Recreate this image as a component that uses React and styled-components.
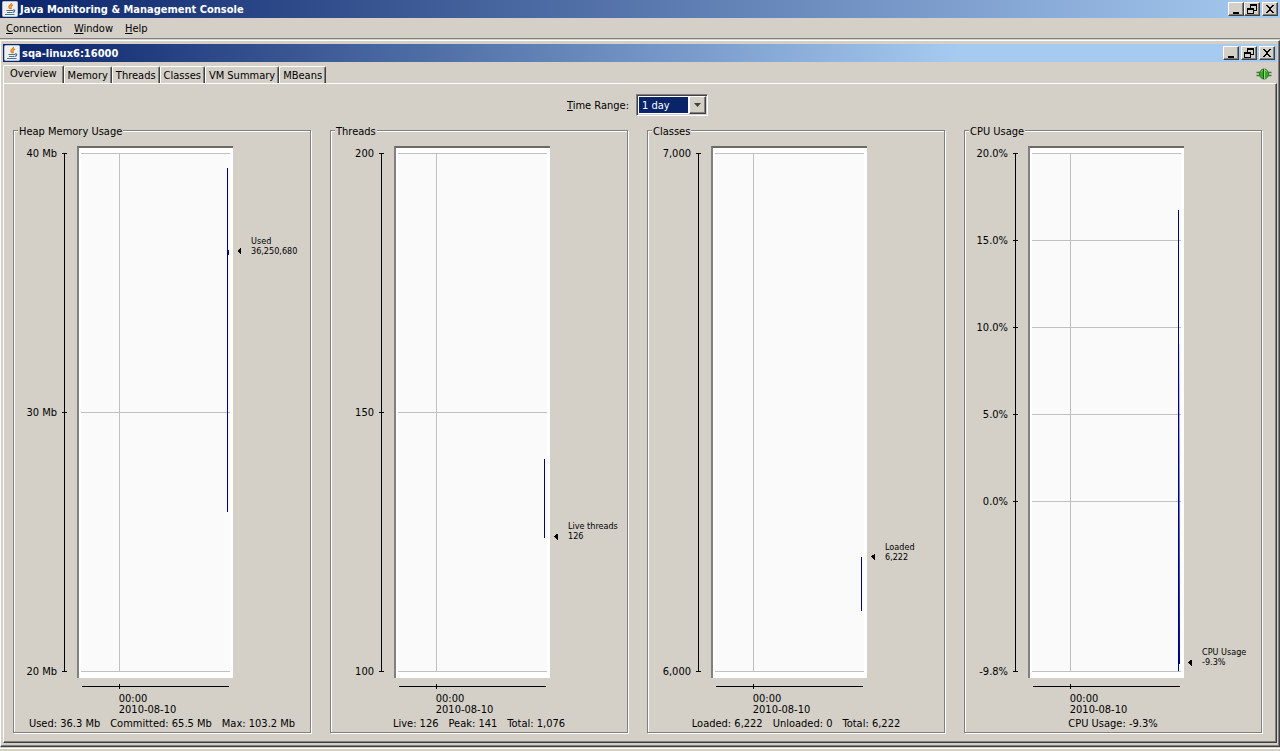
import React from 'react';
import styled, { createGlobalStyle } from 'styled-components';

const Global = createGlobalStyle`
  * { box-sizing: border-box; }
  body {
    margin: 0;
    background: #d4d0c8;
    color: #000;
    font: 11px/14px "DejaVu Sans Condensed", "DejaVu Sans", sans-serif;
  }
  button, select { font: inherit; color: inherit; }
`;

const Screen = styled.div`
  display: flex;
  flex-direction: column;
  min-height: 100vh;
  padding-bottom: 4px;
`;

const TitleBar = styled.header`
  display: flex;
  align-items: center;
  gap: 2px;
  height: 18px;
  padding: ${p => (p.$inner ? '0 2px 0 1px' : '0 2px')};
  background: linear-gradient(90deg, #0a246a, #a6caf0 ${p => (p.$inner ? '75%' : '100%')});
  color: #fff;
`;

const Title = styled.h1`
  flex: 1;
  margin: 0;
  padding-top: 2px;
  font-size: 11px;
  line-height: 14px;
  font-weight: bold;
`;

const Controls = styled.div`
  display: flex;
  gap: ${p => p.$gap || '0'};
`;

const ControlButton = styled.button`
  display: grid;
  place-items: center;
  width: 16px;
  height: 14px;
  margin-left: ${p => (p.$spaced ? '2px' : '0')};
  padding: 0;
  border: 1px solid;
  border-color: #fff #404040 #404040 #fff;
  background: #d4d0c8;
  box-shadow: inset -1px -1px 0 #808080;
`;

const MenuBar = styled.nav`
  display: flex;
  gap: 12px;
  height: 21px;
  padding: 4px 6px 0;
  border-bottom: 1px solid #808080;
`;

const MenuButton = styled.button`
  height: 14px;
  padding: 0;
  border: 0;
  background: none;
`;

const Frame = styled.main`
  display: flex;
  flex: 1;
  flex-direction: column;
  margin-top: 1px;
  padding: 3px 2px;
  border: 1px solid;
  border-color: #fff #404040 #404040 #fff;
  box-shadow: inset -1px -1px 0 #808080, 0 1px 0 #d4d0c8, 0 2px 0 #fff;
`;

const TabStrip = styled.div`
  display: flex;
  align-items: flex-end;
  height: 21px;
  padding-top: 2px;
`;

const Tab = styled.button`
  height: ${p => (p.$active ? '19px' : '17px')};
  margin-bottom: ${p => (p.$active ? '-1px' : '0')};
  padding: ${p => (p.$active ? '0 6px 2px' : '2px 3px 0')};
  border: 1px solid;
  border-color: #fff #404040 transparent #fff;
  border-bottom: 0;
  border-radius: 2px 2px 0 0;
  background: #d4d0c8;
  box-shadow: inset -1px 0 0 #808080;
  white-space: nowrap;
`;

const Status = styled.div`
  margin: 0 5px 2px auto;
  height: 14px;
`;

const Page = styled.div`
  display: flex;
  flex: 1;
  flex-direction: column;
  padding: 10px 14px 9px 9px;
  border: 1px solid;
  border-color: #fff #404040 #404040 #fff;
  box-shadow: inset -1px -1px 0 #808080;
`;

const RangeRow = styled.div`
  display: flex;
  align-items: center;
  justify-content: center;
  gap: 7px;
  margin-bottom: 14px;
`;

const RangeLabel = styled.label`
  padding-top: 2px;
`;

const SelectBox = styled.span`
  display: grid;
  grid-template-columns: 1fr 17px;
  width: 72px;
  height: 22px;
  padding: 1px;
  border: 1px solid;
  border-color: #808080 #fff #fff #808080;
  box-shadow: inset 1px 1px 0 #404040, inset -1px -1px 0 #d4d0c8;
  background: #fff;
`;

const Select = styled.select`
  grid-area: 1 / 1 / 2 / 3;
  appearance: none;
  margin: 1px 18px 1px 1px;
  padding: 2px 3px 0;
  border: 0;
  border-radius: 0;
  background: #0a246a;
  color: #fff;
  outline: 0;
`;

const SelectArrow = styled.span`
  grid-area: 1 / 2;
  display: grid;
  place-items: center;
  border: 1px solid;
  border-color: #fff #404040 #404040 #fff;
  box-shadow: inset -1px -1px 0 #808080;
  background: #d4d0c8;
  pointer-events: none;
`;

const Panels = styled.div`
  display: grid;
  flex: 1;
  grid-template-columns: repeat(4, minmax(0, 1fr));
  gap: 19px;
`;

const Panel = styled.section`
  display: flex;
  flex-direction: column;
  border: 1px solid #808080;
  box-shadow: 1px 1px 0 #fff, inset 1px 1px 0 #fff;
`;

const Legend = styled.h2`
  align-self: flex-start;
  margin: -6px 0 7px 4px;
  padding: 0 1px;
  background: #d4d0c8;
  font-size: 11px;
  line-height: 14px;
  font-weight: normal;
`;

const Chart = styled.div`
  display: grid;
  flex: 1;
  grid-template-columns: 63px minmax(0, 1fr) 77px;
  grid-template-rows: minmax(400px, 1fr) 38px;
`;

const Cell = styled.div`
  display: grid;
  grid-template-rows: minmax(0, 1fr);
  min-height: 0;
  padding: 7px 0;
`;

const Plot = styled.div`
  display: grid;
  grid-template-rows: minmax(0, 1fr);
  min-height: 0;
  padding: 5px 3px 7px 2px;
  border: solid;
  border-width: 2px 0 0 2px;
  border-color: #6c6a66 #fff #fff #808080;
  background: #fff;
`;

const TimeAxis = styled.div`
  grid-column: 2;
  display: grid;
  grid-template-rows: minmax(0, 1fr);
  min-height: 0;
  padding: 6px 4px 0 5px;
`;

const Drawing = styled.svg`
  display: block;
  width: 100%;
  height: 100%;
  overflow: visible;
  shape-rendering: crispEdges;
`;

const MarkerText = styled.text`
  font-size: 9px;
`;

const Summary = styled.footer`
  display: flex;
  justify-content: center;
  gap: 10px;
  margin-bottom: 1px;
  padding-top: 1px;
  white-space: nowrap;
`;

const JavaIcon = () => (
  <svg width="16" height="16" viewBox="0 0 16 16" aria-hidden="true">
    <rect x="0.500" y="0.500" width="15" height="15" rx="1" fill="#eef0f2" stroke="#b4c0cc" />
    <path d="M9.500 2C10 4 6 4.500 7 6.500L8.500 8M11 4C8.500 5 8.500 6.500 9.500 8" fill="none" stroke="#e8821e" strokeWidth="1.400" />
    <path d="M4.500 9.500H11M5 11.500H10.500M11 9C13.500 8.500 13 11 11 11.300M3 13.500H12.500" fill="none" stroke="#4b7195" strokeWidth="1.200" />
  </svg>
);

const glyphs = {
  Minimize: <path d="M2 8H8V10H2Z" />,
  Restore: (
    <path
      fillRule="evenodd"
      d="M3 0H10V7H7V10H0V4H3ZM4 2V4H7V6H9V2ZM1 6V9H6V6Z"
    />
  ),
  Close: (
    <path d="M1 1H3V2H4V3H6V2H7V1H9V2H8V3H7V4H6V6H7V7H8V8H9V9H7V8H6V7H4V8H3V9H1V8H2V7H3V6H4V4H3V3H2V2H1Z" />
  ),
};

const WindowControls = ({ gap }) => (
  <Controls $gap={gap}>
    {Object.keys(glyphs).map(name => (
      <ControlButton key={name} aria-label={name} $spaced={name === 'Close' && !gap}>
        <svg width="10" height="10" viewBox="0 0 10 10" shapeRendering="crispEdges">{glyphs[name]}</svg>
      </ControlButton>
    ))}
  </Controls>
);

const ConnectedIcon = () => (
  <svg width="16" height="14" viewBox="0 0 16 14" role="img" aria-label="Connected">
    <path d="M0.500 5.500H4M0.500 8.500H4M12 5.500H15.500M12 8.500H15.500" stroke="#3d7a35" strokeWidth="1.500" />
    <ellipse cx="8" cy="7" rx="4.500" ry="5" fill="#3fa52b" stroke="#2f7a22" />
    <path d="M5 4.500C6 3 10 3 11 4.500" fill="none" stroke="#7fd065" />
    <path d="M7.500 2V12" stroke="#1f5a16" />
    <path d="M8.500 2V12" stroke="#8fdc78" />
  </svg>
);

const menus = ['Connection', 'Window', 'Help'];
const tabs = ['Overview', 'Memory', 'Threads', 'Classes', 'VM Summary', 'MBeans'];

const charts = [
  {
    title: 'Heap Memory Usage',
    max: 40, min: 20,
    ticks: [[40, '40 Mb'], [30, '30 Mb'], [20, '20 Mb']],
    lines: [{ x: 98, from: 39.42, to: 26.15 }, { x: 98.7, from: 36.25, to: 36.05 }],
    marker: { at: 36.22, name: 'Used', value: '36,250,680' },
    summary: ['Used: 36.3 Mb', 'Committed: 65.5 Mb', 'Max: 103.2 Mb'],
  },
  {
    title: 'Threads',
    max: 200, min: 100,
    ticks: [[200, '200'], [150, '150'], [100, '100']],
    lines: [{ x: 98, from: 141, to: 125.7 }],
    marker: { at: 126, name: 'Live threads', value: '126' },
    summary: ['Live: 126', 'Peak: 141', 'Total: 1,076'],
  },
  {
    title: 'Classes',
    max: 7000, min: 6000,
    ticks: [[7000, '7,000'], [6000, '6,000']],
    lines: [{ x: 98, from: 6221, to: 6115 }],
    marker: { at: 6221, name: 'Loaded', value: '6,222' },
    summary: ['Loaded: 6,222', 'Unloaded: 0', 'Total: 6,222'],
  },
  {
    title: 'CPU Usage',
    max: 20, min: -9.8,
    ticks: [[20, '20.0%'], [15, '15.0%'], [10, '10.0%'], [5, '5.0%'], [0, '0.0%'], [-9.8, '-9.8%']],
    lines: [{ x: 98, from: 16.7, to: -9.8 }, { x: 98.7, from: 9, to: -9.4, fade: true }],
    marker: { at: -9.3, name: 'CPU Usage', value: '-9.3%' },
    summary: ['CPU Usage: -9.3%'],
  },
];

function ChartPanel({ chart }) {
  const { title, max, min, ticks, lines, marker, summary } = chart;
  const y = v => `${((max - v) / (max - min)) * 100}%`;
  return (
    <Panel aria-label={title}>
      <Legend>{title}</Legend>
      <Chart>
        <Cell>
          <Drawing>
            <rect x="50" width="1" height="100%" />
            {ticks.map(([v, label]) => (
              <React.Fragment key={label}>
                <rect x="48" y={y(v)} width="5" height="1" />
                <text x="43" y={y(v)} dy="4" textAnchor="end">{label}</text>
              </React.Fragment>
            ))}
          </Drawing>
        </Cell>
        <Plot>
          <Drawing>
            <defs>
              <linearGradient id="fade" x1="0" x2="0" y1="0" y2="1">
                <stop offset="0" stopColor="#0000a0" stopOpacity="0.100" />
                <stop offset="1" stopColor="#000090" />
              </linearGradient>
            </defs>
            <rect width="100%" height="100%" fill="#fafafa" />
            {ticks.map(([v]) => (
              <rect key={v} y={y(v)} width="100%" height="1" fill="#c0c0c0" />
            ))}
            <rect x="25.5%" width="1" height="100%" fill="#c0c0c0" />
            {lines.map(l => (
              <rect
                key={l.x}
                x={`${l.x}%`}
                y={y(l.from)}
                width="1"
                height={`${((l.from - l.to) / (max - min)) * 100}%`}
                fill={l.fade ? 'url(#fade)' : '#000080'}
              />
            ))}
          </Drawing>
        </Plot>
        <Cell>
          <Drawing>
            <svg y={y(marker.at)} width="60" height="4" overflow="visible">
              <path d="M4 0L8 -3V4Z" />
              <MarkerText x="18" y="-7">{marker.name}</MarkerText>
              <MarkerText x="18" y="3">{marker.value}</MarkerText>
            </svg>
          </Drawing>
        </Cell>
        <TimeAxis>
          <Drawing>
            <rect y="2" width="100%" height="1" />
            <rect x="25%" width="1" height="5" />
            <text x="25%" y="18">00:00</text>
            <text x="25%" y="29">2010-08-10</text>
          </Drawing>
        </TimeAxis>
      </Chart>
      <Summary>
        {summary.map(s => <span key={s}>{s}</span>)}
      </Summary>
    </Panel>
  );
}

export default function App() {
  return (
    <Screen>
      <Global />
      <TitleBar>
        <JavaIcon />
        <Title>Java Monitoring &amp; Management Console</Title>
        <WindowControls />
      </TitleBar>
      <MenuBar>
        {menus.map(m => (
          <MenuButton key={m}><u>{m[0]}</u>{m.slice(1)}</MenuButton>
        ))}
      </MenuBar>
      <Frame>
        <TitleBar $inner>
          <JavaIcon />
          <Title as="h2">sqa-linux6:16000</Title>
          <WindowControls gap="2px" />
        </TitleBar>
        <TabStrip role="tablist">
          {tabs.map((t, i) => (
            <Tab key={t} role="tab" aria-selected={i === 0} $active={i === 0}>{t}</Tab>
          ))}
          <Status><ConnectedIcon /></Status>
        </TabStrip>
        <Page>
          <RangeRow>
            <RangeLabel htmlFor="range"><u>T</u>ime Range:</RangeLabel>
            <SelectBox>
              <Select id="range" defaultValue="1 day">
                <option>1 day</option>
              </Select>
              <SelectArrow>
                <svg width="7" height="4" aria-hidden="true"><path d="M0 0H7L3.500 4Z" fill="#404040" /></svg>
              </SelectArrow>
            </SelectBox>
          </RangeRow>
          <Panels>
            {charts.map(c => <ChartPanel key={c.title} chart={c} />)}
          </Panels>
        </Page>
      </Frame>
    </Screen>
  );
}
